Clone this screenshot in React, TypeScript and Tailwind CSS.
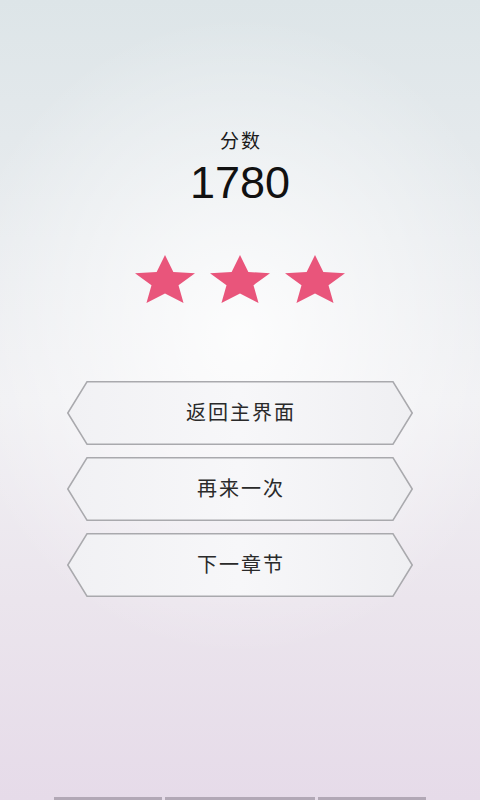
const BUTTONS = ["返回主界面", "再来一次", "下一章节"];

function Star() {
  return (
    <svg
      viewBox="2.45 0 95.1 90.45"
      preserveAspectRatio="none"
      className="h-[48px] w-[60px]"
    >
      <polygon
        points="50,0 63.23,31.8 97.55,34.55 71.4,56.95 79.39,90.45 50,72.5 20.61,90.45 28.6,56.95 2.45,34.55 36.77,31.8"
        fill="#e9557b"
      />
    </svg>
  );
}

function HexButton({ label }: { label: string }) {
  return (
    <button className="relative flex h-[64px] w-[346px] items-center justify-center">
      <svg
        viewBox="0 0 346 64"
        className="absolute inset-0 h-full w-full"
      >
        <defs>
          <linearGradient id="hexFill" x1="0" y1="0" x2="1" y2="0">
            <stop offset="0%" stopColor="#f1f1f4" />
            <stop offset="50%" stopColor="#f7f7f9" />
            <stop offset="100%" stopColor="#efeff2" />
          </linearGradient>
        </defs>
        <polygon
          points="20,0.75 326,0.75 345.2,32 326,63.25 20,63.25 0.8,32"
          fill="url(#hexFill)"
          stroke="#a9a9ad"
          strokeWidth="1.5"
        />
      </svg>
      <span className="relative pl-[2px] text-[20px] tracking-[2px] text-[#2a2a2a]">{label}</span>
    </button>
  );
}

export default function App() {
  return (
    <div
      className="flex h-[800px] w-[480px] flex-col items-center overflow-hidden bg-[radial-gradient(ellipse_60%_40%_at_50%_42%,rgba(255,255,255,0.85)_0%,rgba(255,255,255,0)_100%),linear-gradient(to_bottom,#dde5e8_0%,#e9ecef_30%,#f0f0f3_50%,#ebe5ed_75%,#e6dbe9_100%)]"
      style={{ fontFamily: '"Liberation Sans", "Noto Sans CJK SC", sans-serif' }}
    >
      <div className="mt-[130px] pl-[2px] text-[19px] leading-[24px] tracking-[2px] text-[#1a1a1a]">分数</div>
      <div className="mt-[3px] text-[45px] leading-[52px] text-[#111]">1780</div>

      <div className="mt-[46px] flex gap-[15px]">
        <Star />
        <Star />
        <Star />
      </div>

      <div className="mt-[78px] flex flex-col gap-[12px]">
        {BUTTONS.map((b) => (
          <HexButton key={b} label={b} />
        ))}
      </div>

      <div className="mt-auto flex gap-[3px]">
        <div className="h-[3px] w-[108px] bg-[#b2a8b6]" />
        <div className="h-[3px] w-[150px] bg-[#b2a8b6]" />
        <div className="h-[3px] w-[108px] bg-[#b2a8b6]" />
      </div>
    </div>
  );
}
